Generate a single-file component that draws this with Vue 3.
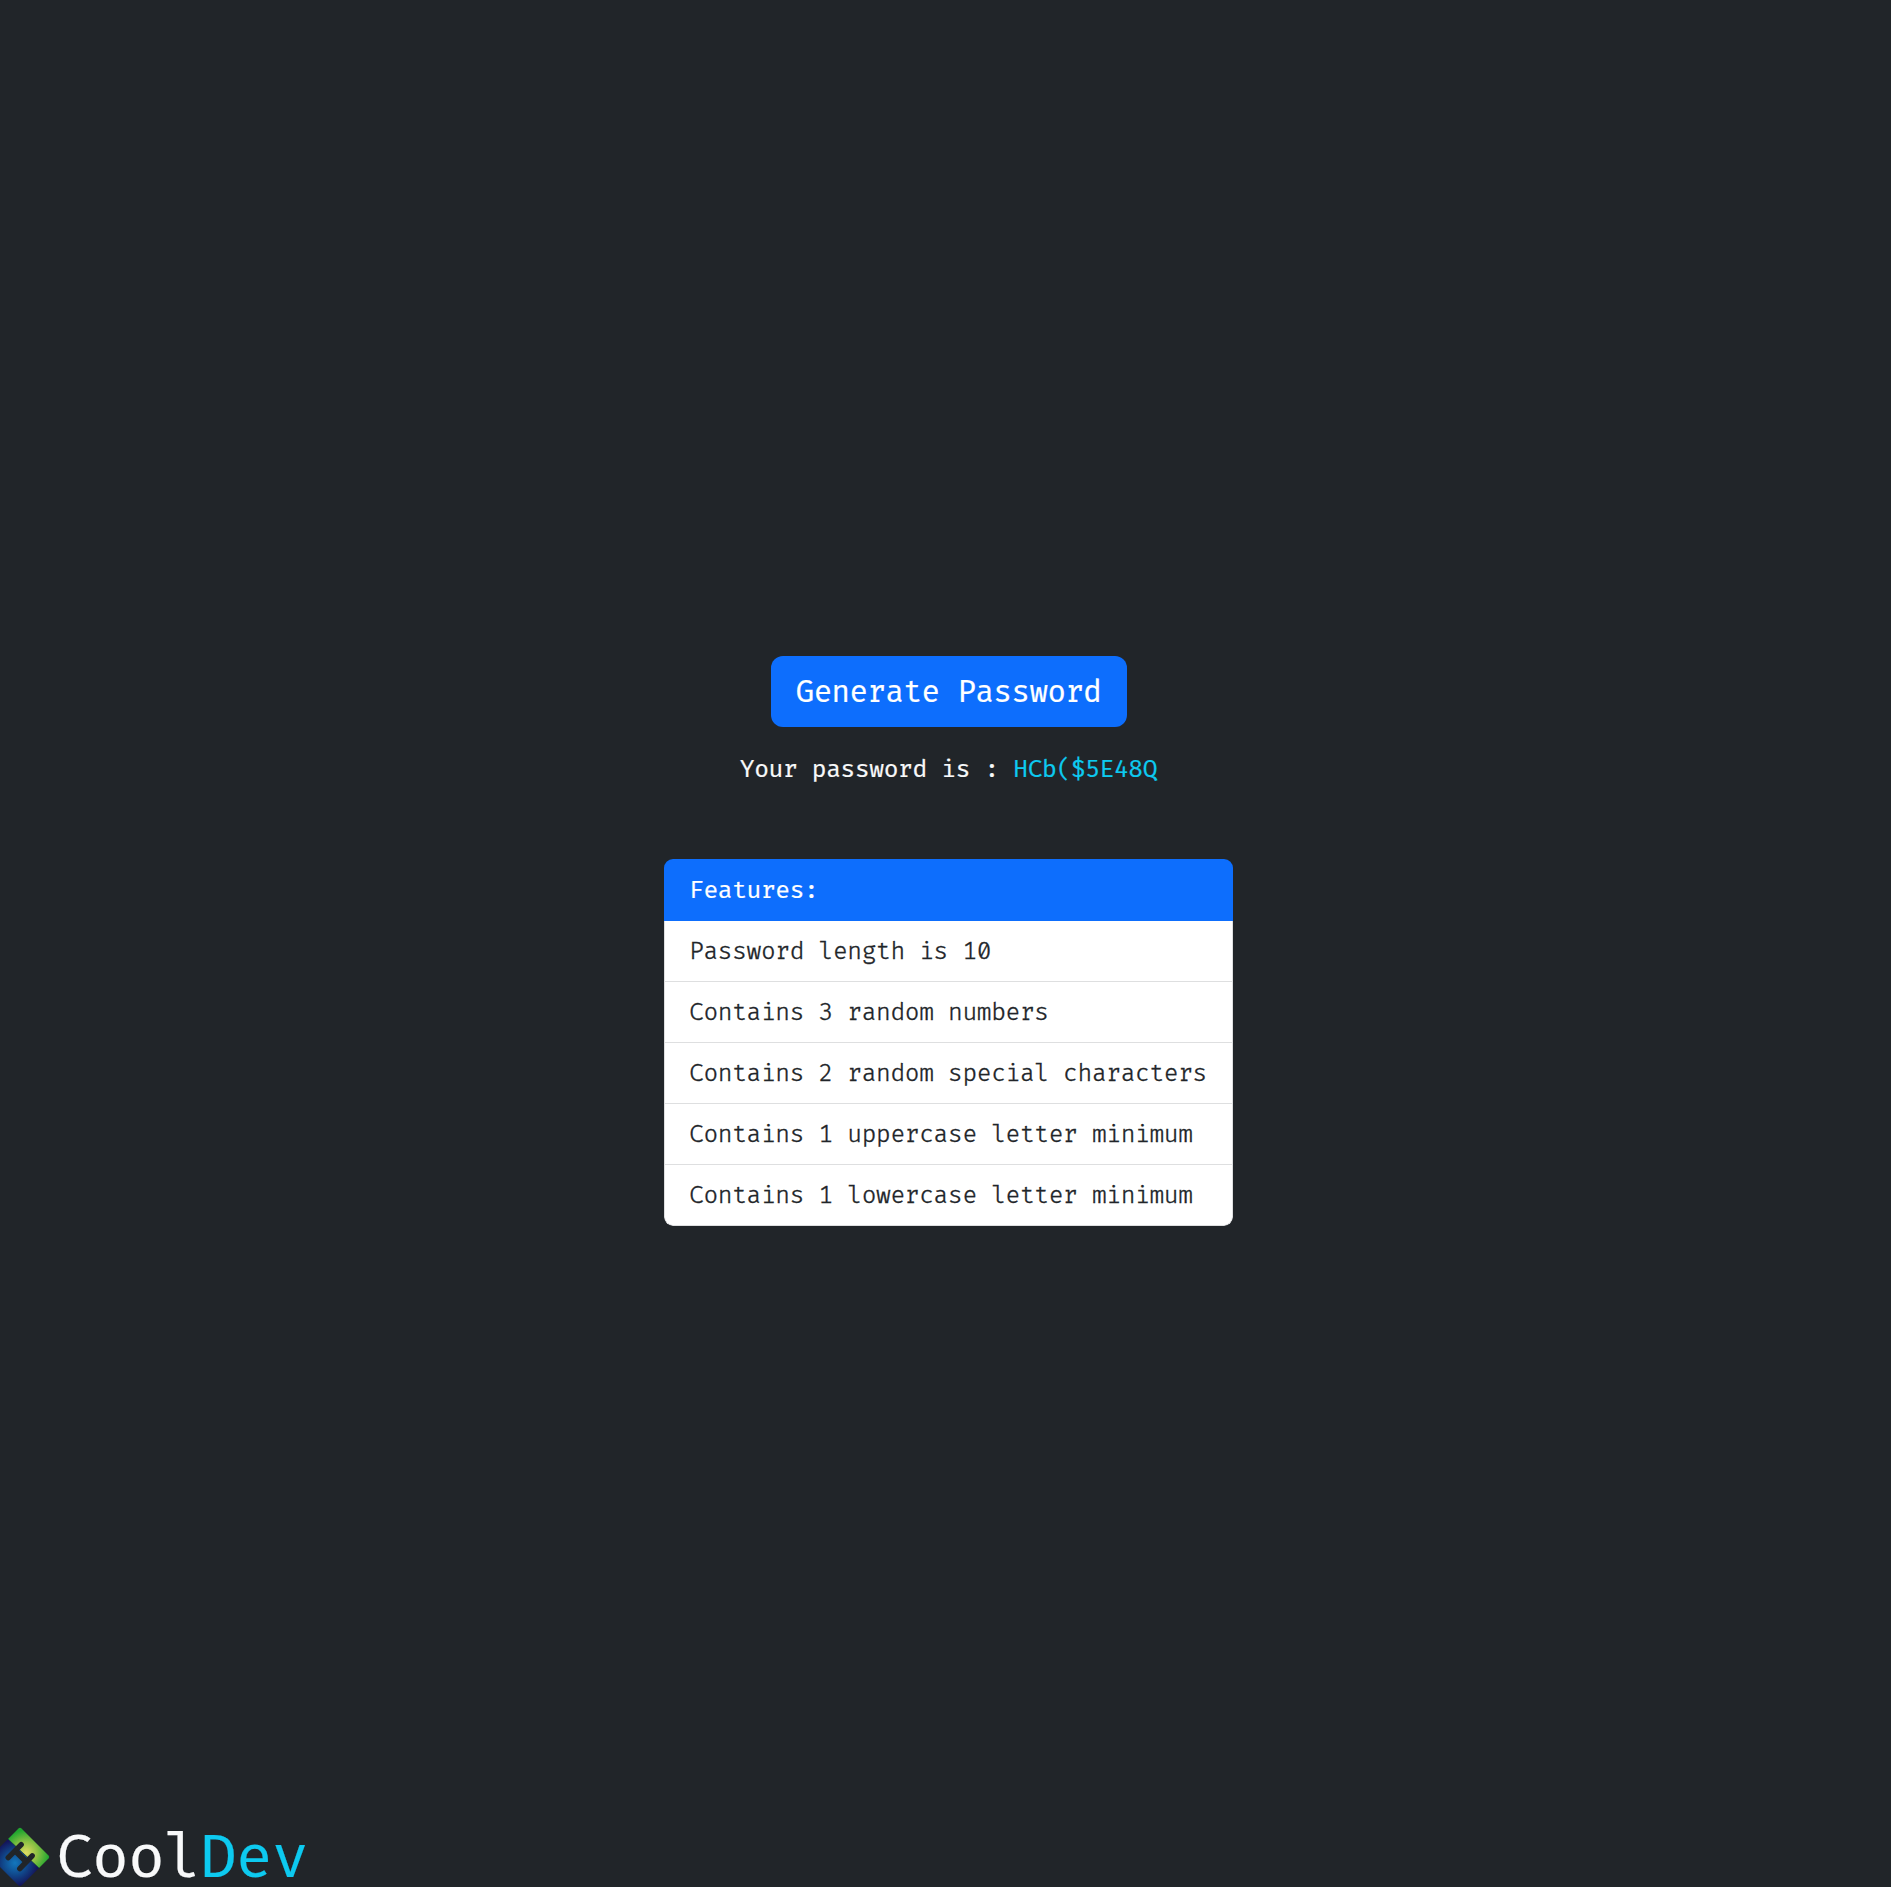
<script setup>
const password = 'HCb($5E48Q'
const features = [
  'Password length is 10',
  'Contains 3 random numbers',
  'Contains 2 random special characters',
  'Contains 1 uppercase letter minimum',
  'Contains 1 lowercase letter minimum',
]
</script>

<template>
  <div class="page">
    <main class="content">
      <button class="generate" type="button">Generate Password</button>
      <p class="result">Your password is : <span class="info">{{ password }}</span></p>
      <ul class="list">
        <li class="head">Features:</li>
        <li v-for="f in features" :key="f" class="item">{{ f }}</li>
      </ul>
    </main>
    <footer class="brand">
      <svg class="logo" viewBox="0 0 60 60" width="60" height="60">
        <defs>
          <radialGradient id="green" gradientUnits="userSpaceOnUse" cx="36" cy="26" r="23">
            <stop offset="0" stop-color="#e0dd62" />
            <stop offset="0.5" stop-color="#8cc144" />
            <stop offset="1" stop-color="#21a62f" />
          </radialGradient>
          <radialGradient id="blue" gradientUnits="userSpaceOnUse" cx="25" cy="36" r="23">
            <stop offset="0" stop-color="#1377bd" />
            <stop offset="0.5" stop-color="#104a8d" />
            <stop offset="1" stop-color="#141459" />
          </radialGradient>
        </defs>
        <path d="M18 12 L49 41 L32 58 Q30 60 28 58 L2 32 Q0 30 2 28 Z" fill="url(#blue)" />
        <path d="M18 12 L28.5 1.5 Q30 0 31.5 1.5 L58.5 28.5 Q60 30 58.5 31.5 L49 41 Z" fill="url(#green)" />
        <path d="M18 12 L49 41" stroke="#0b3b45" stroke-width="1" opacity="0.6" />
        <g stroke="#212529" stroke-width="5.4" stroke-linecap="round" fill="none">
          <path d="M31.2 17.6 L18.2 30.6" />
          <path d="M42.2 28.8 L29.8 41.6" />
          <path d="M26 24.5 L36 34.5" stroke-width="6" stroke-linecap="butt" />
        </g>
      </svg>
      <span class="name">Cool<span class="info">Dev</span></span>
    </footer>
  </div>
</template>

<style>
body {
  margin: 0;
  background: #212529;
}
</style>

<style scoped>
.page {
  box-sizing: border-box;
  height: 1887px;
  padding-top: 656px;
  display: flex;
  flex-direction: column;
  justify-content: space-between;
  overflow: hidden;
  background: #212529;
  color: #f8f9fa;
  font-family: "Fira Code", "DejaVu Sans Mono", monospace;
  font-size: 24px;
  line-height: 36px;
  letter-spacing: -0.38px;
  -webkit-text-stroke-width: 0.2px;
}
.content {
  display: flex;
  flex-direction: column;
  align-items: center;
  padding-left: 6px;
}
.generate {
  box-sizing: border-box;
  width: 356px;
  height: 71px;
  padding: 1px 0 0;
  border: 0;
  border-radius: 12px;
  background: #0d6efd;
  color: #fff;
  font-family: inherit;
  font-size: 30px;
  line-height: 45px;
  letter-spacing: -0.48px;
}
.result {
  margin: 25px 0 71px;
  white-space: pre;
}
.info {
  color: #0dcaf0;
}
.list {
  box-sizing: border-box;
  width: 569px;
  height: 367px;
  margin: 0;
  padding: 0;
  list-style: none;
  border-radius: 9px;
  overflow: hidden;
}
.head {
  box-sizing: border-box;
  height: 62px;
  padding: 14px 25px 12px;
  background: #0d6efd;
  color: #fff;
}
.item {
  box-sizing: border-box;
  height: 61px;
  padding: 13px 24px 11px;
  border: solid #dedfe0;
  border-width: 0 1px 1px;
  background: #fff;
  color: #212529;
  font-weight: 300;
  -webkit-text-stroke-width: 0.3px;
  white-space: nowrap;
}
.item:last-child {
  border-radius: 0 0 9px 9px;
}
.brand {
  display: flex;
  height: 60px;
  margin-left: -10px;
}
.logo {
  flex: none;
}
.name {
  margin-left: 6px;
  padding-top: 3px;
  font-size: 60px;
  line-height: 58px;
  letter-spacing: -0.96px;
}
</style>
